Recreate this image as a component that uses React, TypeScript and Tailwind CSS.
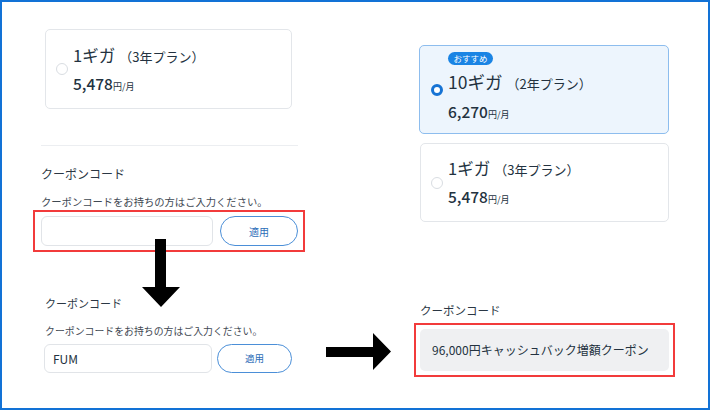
import type { ReactNode } from 'react';

const font = { fontFamily: '"Noto Sans CJK JP", "Noto Sans", sans-serif' };

type PlanProps = {
  speed: string;
  term: string;
  price: string;
  selected?: boolean;
  badge?: string;
  className?: string;
};

const Radio = ({ on }: { on?: boolean }) =>
  on ? (
    <span className="block h-3 w-3 shrink-0 rounded-full border-[3.5px] border-[#1673d4] bg-white" />
  ) : (
    <span className="block h-3 w-3 shrink-0 rounded-full border border-[#d9dde2] bg-white" />
  );

const PlanCard = ({ speed, term, price, selected, badge, className }: PlanProps) => (
  <div
    className={
      'flex items-center rounded-[5px] border ' +
      (selected ? 'border-[#8dbdee] bg-[#edf5fd] ' : 'border-[#e3e6ea] bg-white ') +
      (className ?? '')
    }
  >
    <Radio on={selected} />
    <div className={'ml-[5px] flex flex-col ' + (badge ? 'self-stretch pt-[6px]' : 'pt-[3px]')}>
      {badge && (
        <span className="flex h-[13px] w-[45px] items-center justify-center rounded-full bg-[#1a84e4] text-[8.5px] leading-none text-white">
          {badge}
        </span>
      )}
      <div className={'flex items-baseline leading-[22px] text-[#233240] ' + (badge ? 'mt-[6px]' : '')}>
        <span className={badge ? 'text-[17.5px]' : 'text-[16.5px]'}>{speed}</span>
        <span className="ml-[4px] text-[13px]">（{term}）</span>
      </div>
      <div className={'flex items-baseline leading-[22px] text-[#233240] ' + (badge ? 'mt-[5px]' : 'mt-[4px]')}>
        <span className="text-[15.5px] font-medium">{price}</span>
        <span className="text-[9px]">円/月</span>
      </div>
    </div>
  </div>
);

const CouponInput = ({
  value,
  inputW,
  btnW,
  h,
  gap,
  btnText,
}: {
  value?: string;
  inputW: string;
  btnW: string;
  h: string;
  gap: string;
  btnText: string;
}) => (
  <div className={'flex ' + gap}>
    <div className={'flex items-center rounded-[6px] border border-[#e1e4e8] bg-white pl-[8px] text-[12px] text-[#233240] ' + inputW + ' ' + h}>
      {value}
    </div>
    <div className={'flex items-center justify-center rounded-full border border-[#4b8fd8] bg-white text-[#2b6db8] ' + btnW + ' ' + h + ' ' + btnText}>
      適用
    </div>
  </div>
);

const Heading = ({ children, className }: { children: ReactNode; className: string }) => (
  <div className={'text-[#2b3744] ' + className}>{children}</div>
);

export default function App() {
  return (
    <div style={font} className="relative flex h-[410px] w-[710px] border-2 border-[#1272d6] bg-white">
      {/* left column */}
      <div className="flex w-[312px] flex-col pl-[31px]">
        <PlanCard className="ml-[12px] mt-[27px] h-[80px] w-[247px] pl-[10px]" speed="1ギガ" term="3年プラン" price="5,478" />
        <div className="ml-[8px] mt-[36px] h-px w-[257px] bg-[#eceef1]" />
        <Heading className="ml-[8px] mt-[19px] text-[12px] leading-[18px]">クーポンコード</Heading>
        <div className="ml-[8px] mt-[12px] text-[10.3px] leading-[14px] text-[#3f4953]">
          クーポンコードをお持ちの方はご入力ください。
        </div>
        <div className="mt-[1px] w-[272px] border-2 border-[#f23b3b] py-[4px] pl-[6px] pr-[5px]">
          <CouponInput inputW="w-[172px]" btnW="w-[78px]" h="h-[30px]" gap="gap-[7px]" btnText="text-[10px]" />
        </div>

        <Heading className="ml-[12px] mt-[42px] text-[11px] leading-[18px]">クーポンコード</Heading>
        <div className="ml-[12px] mt-[12px] text-[9.9px] leading-[14px] text-[#3f4953]">
          クーポンコードをお持ちの方はご入力ください。
        </div>
        <div className="ml-[11px] mt-[6px]">
          <CouponInput value="FUM" inputW="w-[168px]" btnW="w-[75px]" h="h-[29px]" gap="gap-[5px]" btnText="text-[9.5px]" />
        </div>
      </div>

      {/* right column */}
      <div className="flex flex-1 flex-col pl-[100px]">
        <PlanCard
          className="ml-[5px] mt-[43px] h-[89px] w-[250px] pl-[11px]"
          speed="10ギガ"
          term="2年プラン"
          price="6,270"
          selected
          badge="おすすめ"
        />
        <PlanCard className="ml-[6px] mt-[9px] h-[79px] w-[249px] pl-[10px]" speed="1ギガ" term="3年プラン" price="5,478" />
        <Heading className="ml-[6px] mt-[79px] text-[11.5px] leading-[18px]">クーポンコード</Heading>
        <div className="mt-[4px] w-[261px] border-2 border-[#f23b3b] p-[4px]">
          <div className="flex h-[42px] items-center rounded-[5px] bg-[#eff0f2] pl-[12px] text-[12px] text-[#233240]">
            96,000円キャッシュバック増額クーポン
          </div>
        </div>
      </div>

      {/* arrows */}
      <svg className="absolute left-[140px] top-[237px]" width="38" height="68" viewBox="0 0 38 68">
        <polygon points="13,0 24,0 24,48 38,48 19,68 0,48 13,48" fill="#000" />
      </svg>
      <svg className="absolute left-[324px] top-[331px]" width="65" height="37" viewBox="0 0 65 37">
        <polygon points="0,14 47,14 47,0 65,18.5 47,37 47,24 0,24" fill="#000" />
      </svg>
    </div>
  );
}
